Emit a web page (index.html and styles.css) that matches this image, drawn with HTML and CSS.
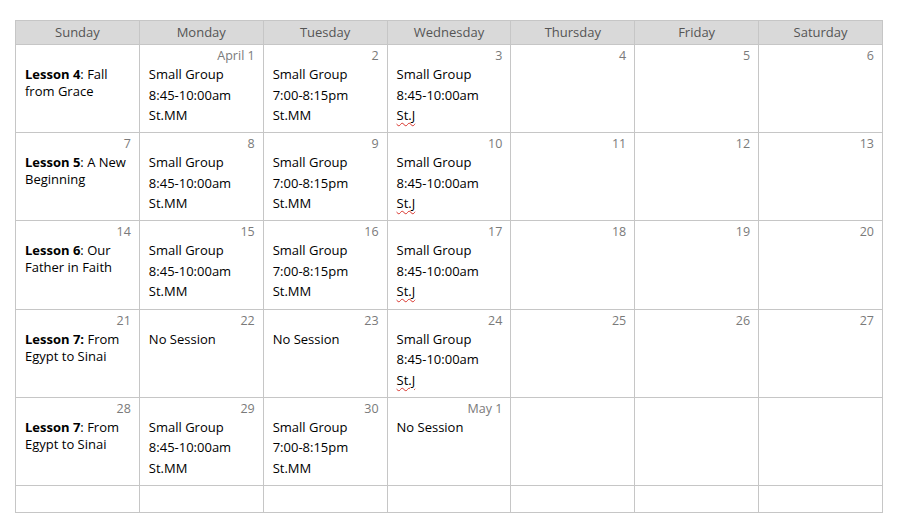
FILE: index.html
```html
<!DOCTYPE html>
<html>
<head>
<meta charset="utf-8">
<link rel="stylesheet" href="styles.css">
</head>
<body>
<table class="cal">
  <thead>
    <tr>
      <th>Sunday</th><th>Monday</th><th>Tuesday</th><th>Wednesday</th><th>Thursday</th><th>Friday</th><th>Saturday</th>
    </tr>
  </thead>
  <tbody>
    <tr class="wk">
      <td><div class="d"></div><div class="lesson"><b>Lesson 4</b>: Fall from Grace</div></td>
      <td><div class="d">April 1</div><div class="ev">Small Group<br>8:45-10:00am<br>St.MM</div></td>
      <td><div class="d">2</div><div class="ev">Small Group<br>7:00-8:15pm<br>St.MM</div></td>
      <td><div class="d">3</div><div class="ev">Small Group<br>8:45-10:00am<br><span class="sp">St.J</span></div></td>
      <td><div class="d">4</div></td>
      <td><div class="d">5</div></td>
      <td><div class="d">6</div></td>
    </tr>
    <tr class="wk">
      <td><div class="d">7</div><div class="lesson"><b>Lesson 5</b>: A New Beginning</div></td>
      <td><div class="d">8</div><div class="ev">Small Group<br>8:45-10:00am<br>St.MM</div></td>
      <td><div class="d">9</div><div class="ev">Small Group<br>7:00-8:15pm<br>St.MM</div></td>
      <td><div class="d">10</div><div class="ev">Small Group<br>8:45-10:00am<br><span class="sp">St.J</span></div></td>
      <td><div class="d">11</div></td>
      <td><div class="d">12</div></td>
      <td><div class="d">13</div></td>
    </tr>
    <tr class="wk">
      <td><div class="d">14</div><div class="lesson"><b>Lesson 6</b>: Our Father in Faith</div></td>
      <td><div class="d">15</div><div class="ev">Small Group<br>8:45-10:00am<br>St.MM</div></td>
      <td><div class="d">16</div><div class="ev">Small Group<br>7:00-8:15pm<br>St.MM</div></td>
      <td><div class="d">17</div><div class="ev">Small Group<br>8:45-10:00am<br><span class="sp">St.J</span></div></td>
      <td><div class="d">18</div></td>
      <td><div class="d">19</div></td>
      <td><div class="d">20</div></td>
    </tr>
    <tr class="wk">
      <td><div class="d">21</div><div class="lesson"><b>Lesson 7:</b> From Egypt to Sinai</div></td>
      <td><div class="d">22</div><div class="ev">No Session</div></td>
      <td><div class="d">23</div><div class="ev">No Session</div></td>
      <td><div class="d">24</div><div class="ev">Small Group<br>8:45-10:00am<br><span class="sp">St.J</span></div></td>
      <td><div class="d">25</div></td>
      <td><div class="d">26</div></td>
      <td><div class="d">27</div></td>
    </tr>
    <tr class="wk">
      <td><div class="d">28</div><div class="lesson"><b>Lesson 7</b>: From Egypt to Sinai</div></td>
      <td><div class="d">29</div><div class="ev">Small Group<br>8:45-10:00am<br>St.MM</div></td>
      <td><div class="d">30</div><div class="ev">Small Group<br>7:00-8:15pm<br>St.MM</div></td>
      <td><div class="d">May 1</div><div class="ev">No Session</div></td>
      <td></td>
      <td></td>
      <td></td>
    </tr>
    <tr class="tail">
      <td></td><td></td><td></td><td></td><td></td><td></td><td></td>
    </tr>
  </tbody>
</table>
</body>
</html>
```

FILE: styles.css
```css
html, body {
  margin: 0;
  padding: 0;
  background: #ffffff;
}

body {
  padding: 20px 0 0 15px;
  font-family: "Open Sans", "Liberation Sans", sans-serif;
  color: #000000;
}

.cal {
  border-collapse: collapse;
  table-layout: fixed;
  width: 868px;
}

.cal th,
.cal td {
  border: 1px solid #c6c6c6;
  padding: 0;
}

.cal th {
  background: #d9d9d9;
  color: #555555;
  font-weight: normal;
  font-size: 13px;
  height: 23px;
  line-height: 23px;
  text-align: center;
}

.cal td {
  vertical-align: top;
  height: 87.2px;
}

.cal .tail td {
  height: 26px;
}

.d {
  height: 17px;
  margin-top: 2px;
  padding-right: 8px;
  text-align: right;
  font-size: 12.5px;
  line-height: 17px;
  color: #7a7a7a;
}

.ev {
  padding-left: 9px;
  font-size: 13px;
  line-height: 20.5px;
}

.lesson {
  margin-top: 2px;
  padding: 0 8px 0 9px;
  font-size: 13px;
  line-height: 17px;
}

.lesson b {
  font-weight: bold;
}

.sp {
  text-decoration: underline wavy #d8342c;
  text-decoration-thickness: 1px;
  text-underline-offset: 2px;
}
```
